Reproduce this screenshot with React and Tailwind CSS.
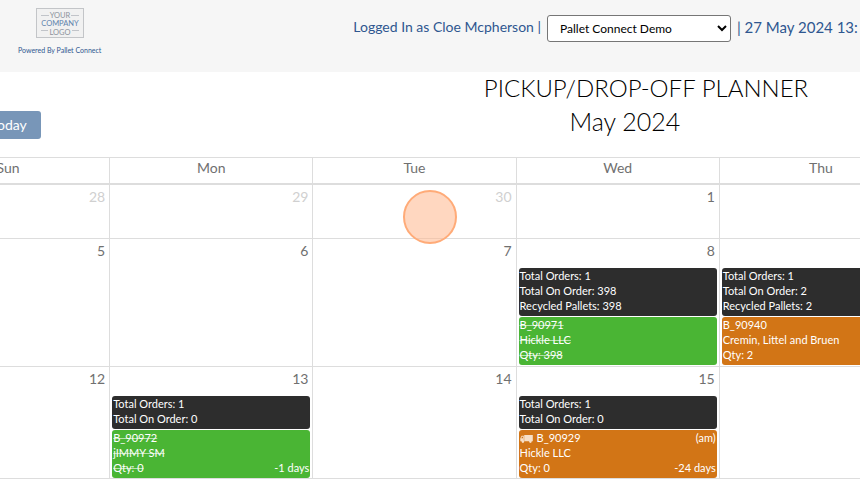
const days = ['Sun', 'Mon', 'Tue', 'Wed', 'Thu'];

const weeks = [
  {
    height: 'h-[55px]',
    cells: [
      { day: 28, muted: true },
      { day: 29, muted: true },
      { day: 30, muted: true, marker: true },
      { day: 1 },
      { day: '' },
    ],
  },
  {
    height: 'h-32',
    cells: [
      { day: 5 },
      { day: 6 },
      { day: 7 },
      {
        day: 8,
        totals: ['Total Orders: 1', 'Total On Order: 398', 'Recycled Pallets: 398'],
        order: { id: 'B_90971', customer: 'Hickle LLC', qty: 398, done: true },
      },
      {
        day: '',
        totals: ['Total Orders: 1', 'Total On Order: 2', 'Recycled Pallets: 2'],
        order: { id: 'B_90940', customer: 'Cremin, Littel and Bruen', qty: 2 },
      },
    ],
  },
  {
    height: 'h-28',
    cells: [
      { day: 12 },
      {
        day: 13,
        totals: ['Total Orders: 1', 'Total On Order: 0'],
        order: { id: 'B_90972', customer: 'jIMMY SM', qty: 0, done: true, late: '-1 days' },
      },
      { day: 14 },
      {
        day: 15,
        totals: ['Total Orders: 1', 'Total On Order: 0'],
        order: { id: 'B_90929', customer: 'Hickle LLC', qty: 0, truck: true, slot: '(am)', late: '-24 days' },
      },
      { day: '' },
    ],
  },
];

function Logo() {
  return (
    <svg viewBox="0 0 48 30" className="h-[30px] w-12" role="img" aria-label="Your company logo">
      <rect x="0.5" y="0.5" width="47" height="29" fill="#f1f1f1" stroke="#c3c5c8" />
      <path d="M5 7.5h8M35 7.5h8M5 22.5h7M36 22.5h7" stroke="#b5b9bf" strokeWidth="0.8" />
      <g fontFamily="Lato, sans-serif" fontSize="7.5" textAnchor="middle">
        <text x="24" y="9.5" fill="#8b929c">YOUR</text>
        <text x="24" y="18" fill="#5f82ac">COMPANY</text>
        <text x="24" y="26.5" fill="#8b929c">LOGO</text>
      </g>
    </svg>
  );
}

function Truck() {
  return (
    <svg viewBox="0 0 13 10" className="mr-1 inline-block h-[10px] w-[13px]" fill="#f7dfc6" aria-hidden="true">
      <path d="M4.2 1H12.8v6.2H4.2zM0.3 7.2V4.2L1.7 1.8H3.8v5.4z" />
      <path d="M1.2 4.2L2.1 2.7H3v1.5z" fill="#d27516" />
      <circle cx="2.9" cy="7.6" r="1.3" />
      <circle cx="10.4" cy="7.6" r="1.3" />
    </svg>
  );
}

function Order({ order }) {
  const strike = order.done ? 'line-through decoration-white/60' : '';

  return (
    <a
      href="#"
      className={`mt-px block rounded-[3px] px-px pb-[3px] text-white ${order.done ? 'bg-[#4ab534]' : 'bg-[#d27516]'}`}
    >
      <div className="flex justify-between">
        <span className={strike}>
          {order.truck && <Truck />}
          {order.id}
        </span>
        <span>{order.slot}</span>
      </div>
      <div className={strike}>{order.customer}</div>
      <div className="flex justify-between">
        <span className={strike}>Qty: {order.qty}</span>
        <span>{order.late}</span>
      </div>
    </a>
  );
}

function DayCell({ cell }) {
  return (
    <td className="relative border border-[#ddd] p-0 align-top">
      <div className={`h-[29px] px-1 pt-0.5 text-right text-sm leading-5 ${cell.muted ? 'text-[#d0d0d0]' : 'text-[#707070]'}`}>
        {cell.day}
      </div>
      {cell.marker && (
        <div className="absolute top-[5px] left-[90px] z-10 size-[54px] rounded-full border-2 border-[#ffab78] bg-[#ffb68d]/55" />
      )}
      {cell.totals && (
        <div className="mx-0.5 text-[11px] leading-[15px]">
          <div className="rounded-[3px] bg-[#2d2d2d] px-px pb-[3px] text-white">
            {cell.totals.map((line) => (
              <div key={line}>{line}</div>
            ))}
          </div>
          <Order order={cell.order} />
        </div>
      )}
    </td>
  );
}

function Header() {
  return (
    <header className="flex h-[72px] items-start justify-between bg-[#f6f6f6] text-[#2f5790]">
      <div className="flex flex-col items-center gap-1.5 pt-2 pl-[18px]">
        <Logo />
        <span className="text-[7px] leading-3">Powered By Pallet Connect</span>
      </div>
      <div className="flex items-start gap-1.5 pt-[15px] text-sm leading-6 whitespace-nowrap">
        <label htmlFor="company">Logged In as Cloe Mcpherson |</label>
        <select
          id="company"
          className="h-[27px] w-[184px] rounded-[3px] border border-[#767676] bg-white px-2 text-xs text-black"
        >
          <option>Pallet Connect Demo</option>
        </select>
        <span className="w-[123px] text-[15px]">| 27 May 2024 13:</span>
      </div>
    </header>
  );
}

export default function App() {
  return (
    <div className="h-screen overflow-hidden bg-white font-[Lato,'Noto_Sans',sans-serif]">
      <Header />
      <main>
        <h1 className="pl-[432px] text-center text-2xl leading-8 font-light whitespace-nowrap text-black">
          PICKUP/DROP-OFF PLANNER
        </h1>
        <div className="mb-[18px] flex items-end pt-px">
          <button className="-ml-[22px] h-7 rounded-[3px] bg-[#7896b8] px-3.5 text-sm text-white">today</button>
          <h2 className="flex-1 pb-0.5 pl-[349px] text-center text-[25px] leading-8 font-light text-black">May 2024</h2>
        </div>
        <div className="-mr-[63px] -ml-[94px]">
          <table className="w-full table-fixed border-collapse">
            <thead>
              <tr className="h-[26px]">
                {days.map((day) => (
                  <th key={day} className="border border-b-2 border-[#ddd] p-0 pb-1 text-sm leading-5 font-normal text-[#707070]">
                    {day}
                  </th>
                ))}
              </tr>
            </thead>
            <tbody>
              {weeks.map((week, i) => (
                <tr key={i} className={week.height}>
                  {week.cells.map((cell, j) => (
                    <DayCell key={j} cell={cell} />
                  ))}
                </tr>
              ))}
            </tbody>
          </table>
        </div>
      </main>
    </div>
  );
}
